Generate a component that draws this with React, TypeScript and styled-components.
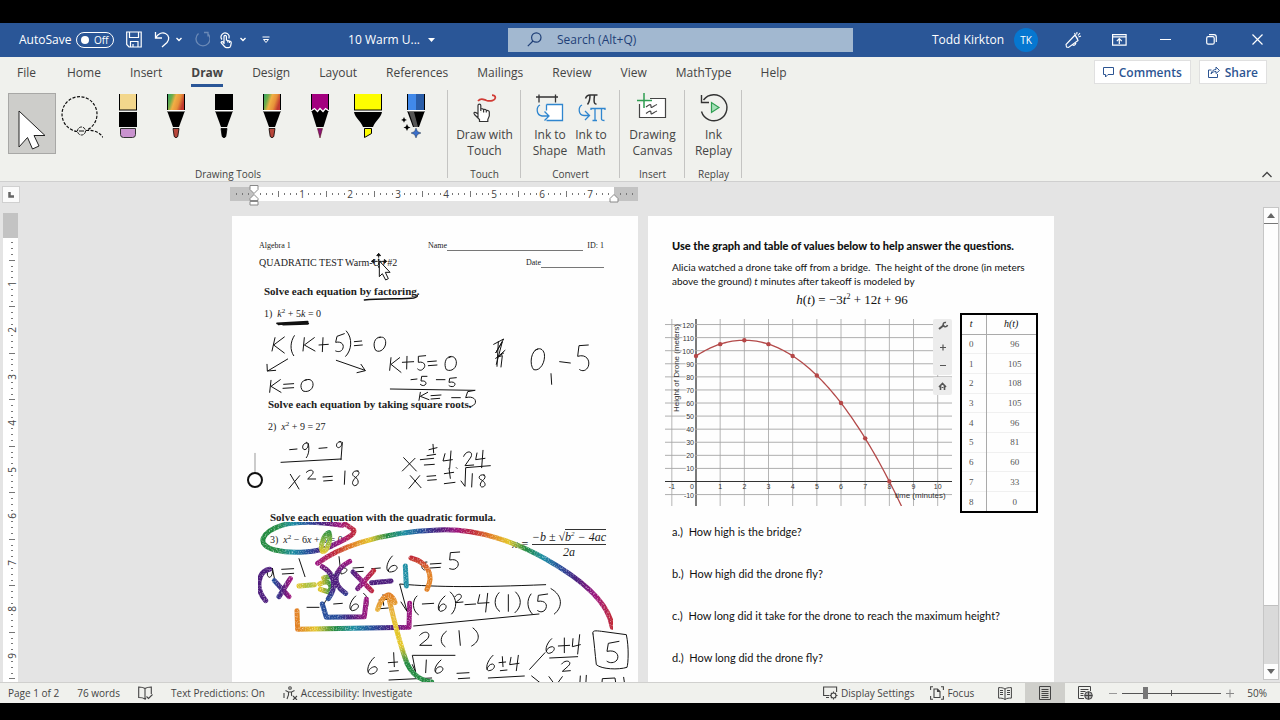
import React from "react";
import styled, { createGlobalStyle } from "styled-components";

const Global = createGlobalStyle`
  *, *::before, *::after { box-sizing: border-box; }
  body { margin: 0; background: #000; }
  button { font: inherit; color: inherit; border: 0; padding: 0; background: none; cursor: pointer; }
  h2, p { margin: 0; font-weight: inherit; font-size: inherit; }
  svg { display: block; flex: none; }
`;

const Screen = styled.div`
  display: flex;
  flex-direction: column;
  height: 100vh;
  min-height: 480px;
  padding: 23px 0 17px;
  background: #000;
  color: #444;
  font-family: "Open Sans", "Noto Sans", sans-serif;
  overflow: hidden;
`;

/* ---------- Title bar ---------- */

const TitleBar = styled.header`
  display: grid;
  grid-template-columns: 508fr 345fr 427fr;
  align-items: center;
  flex: none;
  height: 34px;
  padding-bottom: 1px;
  background: #2a5697;
  color: #fff;
  font-size: 12px;
`;
const QuickAccess = styled.div`
  display: flex;
  align-items: center;
  padding: 0 73px 0 19px;
`;
const AutoSave = styled.button`
  display: flex;
  align-items: center;
  gap: 5px;
  margin-right: 12px;
`;
const Toggle = styled.span`
  display: flex;
  align-items: center;
  justify-content: space-between;
  width: 38px;
  height: 16px;
  padding: 0 5px 0 4px;
  border: 1px solid #fff;
  border-radius: 8px;
  font-size: 10px;
  &::before { content: ""; width: 8px; height: 8px; border-radius: 50%; background: #fff; }
`;
const QuickButton = styled.button<{ $gap?: number; $dim?: boolean }>`
  margin-right: ${(p) => p.$gap ?? 12}px;
  opacity: ${(p) => (p.$dim ? 0.3 : 1)};
`;
const DocTitle = styled.button`
  display: flex;
  align-items: center;
  gap: 8px;
  margin-left: auto;
  white-space: nowrap;
`;
const SearchBox = styled.label`
  display: flex;
  align-items: center;
  gap: 15px;
  height: 24px;
  padding-left: 19px;
  background: #a2b8d0;
  color: #1f3f77;
`;
const SearchInput = styled.input`
  flex: 1;
  min-width: 0;
  border: 0;
  outline: 0;
  padding: 0;
  background: transparent;
  color: #1f3f77;
  font: inherit;
  &::placeholder { color: #1f3f77; opacity: 1; }
`;
const WindowArea = styled.div`
  display: flex;
  align-items: center;
  justify-content: flex-end;
`;
const Account = styled.button`
  display: flex;
  align-items: center;
  gap: 10px;
  margin-right: 12px;
`;
const Avatar = styled.span`
  display: grid;
  place-items: center;
  width: 24px;
  height: 24px;
  border-radius: 50%;
  background: #0677d0;
  font-size: 10px;
`;
const WindowButton = styled.button`
  display: grid;
  place-items: center;
  width: 46px;
  height: 32px;
`;

/* ---------- Ribbon ---------- */

const RibbonTabs = styled.nav`
  display: flex;
  align-items: center;
  flex: none;
  height: 33px;
  padding: 0 13px 0 17px;
  background: #f0f1ed;
  font-size: 12px;
`;
const TabList = styled.div`
  display: flex;
  gap: 29px;
  flex: 1;
`;
const Tab = styled.button<{ $active?: boolean }>`
  line-height: 20px;
  padding: 3px 0 1px;
  border-bottom: 3px solid ${(p) => (p.$active ? "#2a5697" : "transparent")};
  font-weight: ${(p) => (p.$active ? 700 : 400)};
  &:first-child { margin-right: 2px; }
`;
const ActionButton = styled.button`
  display: flex;
  align-items: center;
  gap: 5px;
  height: 24px;
  margin: 0 0 3px 8px;
  padding: 0 8px;
  border: 1px solid #e0e0e0;
  background: #fff;
  color: #2d5592;
  font-weight: 600;
`;
const Ribbon = styled.section`
  display: flex;
  flex: none;
  height: 92px;
  padding: 0 6px 0 8px;
  background: #f0f1ed;
  border-bottom: 1px solid #cfcfcf;
`;
const Group = styled.div<{ $width: number }>`
  display: flex;
  flex-direction: column;
  align-items: center;
  justify-content: space-between;
  width: ${(p) => p.$width}px;
  background: linear-gradient(#c4c4c2, #c4c4c2) 100% 0 / 1px 88px no-repeat;
`;
const GroupTools = styled.div`
  display: flex;
  gap: 1px;
  padding-top: 3px;
`;
const PenTools = styled(GroupTools)`
  gap: 0;
  align-self: flex-start;
`;
const GroupLabel = styled.div`
  font-size: 10px;
  line-height: 14px;
`;
const PenButton = styled.button<{ $active?: boolean }>`
  display: flex;
  justify-content: center;
  width: 48px;
  height: 61px;
  border: 1px solid ${(p) => (p.$active ? "#a8a8a6" : "transparent")};
  background: ${(p) => (p.$active ? "#cdcdca" : "none")};
`;
const LargeButton = styled.button`
  display: flex;
  flex-direction: column;
  align-items: center;
  gap: 2px;
  min-width: 40px;
  font-size: 12px;
  line-height: 16px;
`;
const Collapse = styled.button`
  margin-left: auto;
  padding-bottom: 2px;
  align-self: flex-end;
`;

/* ---------- Workspace ---------- */

const Workspace = styled.main`
  display: grid;
  grid-template-columns: 22px 1fr 17px;
  grid-template-rows: 31px 1fr;
  flex: 1;
  min-height: 0;
  background: #e4e4e4;
`;
const TabSelector = styled.button`
  width: 18px;
  height: 17px;
  margin: 4px 0 0 2px;
  border: 1px solid #d0d0d0;
  background: #fbfbfb;
  display: grid;
  place-items: center;
`;
const RulerTrack = styled.div`
  display: flex;
  justify-content: center;
  padding-top: 5px;
`;
const HRuler = styled.div`
  position: relative;
  display: flex;
  align-items: center;
  width: 408px;
  height: 14px;
  padding-left: 3px;
  margin-right: 417px;
  background: linear-gradient(90deg, #c3c3c3 24px, #fff 24px 384px, #c3c3c3 384px);
`;
const HCell = styled.span`
  display: grid;
  place-items: center;
  flex: none;
  width: 6px;
  font-size: 10px;
  line-height: 14px;
`;
const Mark = styled.i<{ $w: number; $h: number }>`
  width: ${(p) => p.$w}px;
  height: ${(p) => p.$h}px;
  background: #777;
`;
const Indent = styled.svg<{ $x: number }>`
  position: absolute;
  left: ${(p) => p.$x}px;
  top: -2px;
`;
const VRuler = styled.div`
  display: flex;
  flex-direction: column;
  width: 15px;
  margin-left: 3px;
  min-height: 0;
  overflow: hidden;
  background: #fff;
`;
const VMargin = styled.div`
  flex: none;
  height: 25px;
  margin-bottom: 2px;
  background: #c3c3c3;
`;
const VCell = styled.span`
  display: grid;
  place-items: center;
  flex: 1 1 0;
  min-height: 0;
  padding-left: 3px;
  font-size: 10px;
  line-height: 4px;
`;
const VNumber = styled.b`
  font-weight: 400;
  line-height: 4px;
  transform: rotate(-90deg);
`;
const Canvas = styled.div`
  display: flex;
  justify-content: center;
  align-items: flex-start;
  gap: 10px;
  min-height: 0;
  padding: 3px 0 0 1px;
  overflow: hidden;
`;
const ScrollBar = styled.div`
  display: flex;
  flex-direction: column;
  min-height: 0;
  margin: -6px 1px 2px 0;
  border: 1px solid #c6c6c6;
  background: #fdfdfd;
`;
const ScrollThumb = styled.div`
  flex: 1;
  border-top: 1px solid #777;
  border-bottom: 1px solid #c0c0c0;
`;
const ScrollTrack = styled.div`
  flex: none;
  height: 58px;
  background: #dadada;
`;
const ScrollButton = styled.button`
  display: grid;
  place-items: center;
  height: 15px;
`;

/* ---------- Document pages ---------- */

const Page = styled.article`
  position: relative;
  flex: none;
  width: 406px;
  min-height: 528px;
  background: #fefefe;
  color: #222;
`;
const Worksheet = styled(Page)`
  padding: 24px 34px 0 27px;
  font-family: "Liberation Serif", "Times New Roman", serif;
  font-size: 10px;
`;
const HeaderRow = styled.div`
  display: flex;
  align-items: center;
  justify-content: space-between;
  line-height: 12px;
  margin-bottom: 5px;
`;
const Field = styled.span<{ $width: number }>`
  display: flex;
  width: ${(p) => p.$width}px;
  font-size: 8px;
`;
const Blank = styled.span`
  flex: 1;
  margin: 0 4px 1px 0;
  border-bottom: 1px solid #777;
  &:last-child { margin-right: 0; }
`;
const Small = styled.span`
  font-size: 8px;
`;
const Problem = styled.section<{ $indent: number }>`
  height: 113px;
  padding-left: ${(p) => p.$indent}px;
  line-height: 14px;
  white-space: nowrap;
`;
const ProblemList = styled.div`
  padding-top: 10px;
`;
const ProblemTitle = styled.h2`
  margin-bottom: 9px;
  font-weight: 700;
  font-size: 11px;
`;
const Equation = styled.div`
  display: flex;
  justify-content: space-between;
  height: 14px;
  sup { font-size: 7px; line-height: 0; }
`;
const Formula = styled.span`
  display: flex;
  align-items: center;
  height: 30px;
  margin: -4px -2px 0 0;
  gap: 3px;
  font-style: italic;
  font-size: 12px;
`;
const Fraction = styled.span`
  display: flex;
  flex-direction: column;
  align-items: center;
`;
const Numerator = styled.span`
  border-bottom: 1px solid #333;
`;
const Radicand = styled.span`
  border-top: 1px solid #333;
`;
const Ink = styled.svg`
  position: absolute;
  left: 0;
  top: 0;
  fill: none;
  stroke: #111;
  stroke-width: 3;
  stroke-linecap: round;
  stroke-linejoin: round;
`;

const DronePage = styled(Page)`
  padding: 23px 16px 0 24px;
  font-family: Lato, Carlito, sans-serif;
  font-size: 10px;
  line-height: 14px;
  color: #111;
  white-space: nowrap;
`;
const DroneTitle = styled.h2`
  font-size: 11px;
  font-weight: 900;
  margin-bottom: 7px;
`;
const Model = styled.p`
  margin-top: 5px;
  padding-right: 6px;
  text-align: center;
  font-family: "Liberation Serif", "Times New Roman", serif;
  font-size: 13px;
  sup { font-size: 8px; line-height: 0; }
`;
const Figures = styled.div`
  display: flex;
  justify-content: space-between;
  align-items: flex-start;
  margin: 6px 0 12px -7px;
`;
const Chart = styled.svg`
  margin-top: 6px;
  font-family: "Liberation Sans", Arial, sans-serif;
`;
const ValueTable = styled.table`
  width: 78px;
  height: 200px;
  border: 2px solid #000;
  border-collapse: collapse;
  font-family: "Liberation Serif", "Times New Roman", serif;
  font-size: 9px;
  line-height: 12px;
  color: #555;
  th, td { padding: 0; text-align: center; border-top: 1px solid #f0f0f0; }
  th { font-style: italic; font-weight: 400; font-size: 10px; height: 20px; color: #111; }
  tbody tr:first-child td { border-top-color: #aaa; }
  th:first-child, td:first-child { width: 25px; padding-right: 5px; border-right: 1px solid #aaa; }
  td:last-child { padding-left: 7px; }
`;
const Questions = styled.div`
  display: flex;
  flex-direction: column;
  gap: 28px;
  font-size: 11px;
`;
const Question = styled.p`
  white-space: pre;
`;

/* ---------- Status bar ---------- */

const StatusBar = styled.footer`
  display: flex;
  align-items: center;
  flex: none;
  height: 21px;
  padding: 0 13px 0 8px;
  border-top: 1px solid #d0d0ce;
  background: #f0f1ed;
  font-size: 10px;
  white-space: nowrap;
`;
const StatusGroup = styled.div<{ $gap: number; $end?: boolean }>`
  display: flex;
  align-items: center;
  height: 100%;
  gap: ${(p) => p.$gap}px;
  margin: ${(p) => (p.$end ? "0 11px 0 auto" : "0")};
`;
const StatusButton = styled.button`
  display: flex;
  align-items: center;
  gap: 3px;
`;
const ViewButton = styled.button<{ $active?: boolean }>`
  display: grid;
  place-items: center;
  width: 40px;
  height: 100%;
  background: ${(p) => (p.$active ? "#cfcfcb" : "none")};
`;
const ZoomControl = styled.div`
  display: flex;
  align-items: center;
  gap: 5px;
  margin-left: 4px;
`;
const ZoomSlider = styled.input`
  appearance: none;
  width: 99px;
  height: 12px;
  margin: 0;
  background:
    linear-gradient(#555, #555) 50% 50% / 1px 6px no-repeat,
    linear-gradient(#555, #555) 50% 50% / 100% 1px no-repeat;
  &::-webkit-slider-thumb { appearance: none; width: 5px; height: 12px; background: #777; }
`;
const ZoomValue = styled.span`
  margin-left: 8px;
`;

/* ---------- Icons ---------- */

type IconProps = { w: number; h: number; children: React.ReactNode; sw?: number };
const Icon = ({ w, h, children, sw = 1 }: IconProps) => (
  <svg width={w} height={h} viewBox={`0 0 ${w} ${h}`} fill="none" stroke="currentColor" strokeWidth={sw} aria-hidden="true">
    {children}
  </svg>
);
const Chevron = () => <Icon w={6} h={5} sw={1.4}><path d="M.5 1l2.500 2.500L5.500 1" /></Icon>;

const HandIcon = () => (
  <Icon w={14} h={18} sw={1.200}>
    <path d="M5 13V5.500a1.200 1.200 0 0 1 2.400 0V9l4 1.200c1 .4 1 1 .8 2l-.6 3c-.3 1-1 1.500-2 1.500H7.500c-1 0-1.500-.6-2-1.200L2.300 12c-.6-1 .6-1.800 1.400-1.200L5 12M8.800 9.500v2M10.500 10v2" />
    <path d="M3 8.500A4 4 0 1 1 9.800 7.500" />
  </Icon>
);

type PenKind = { top: string; tip: string; kind: "pen" | "pencil" | "marker" | "eraser" | "action"; name: string };
const pens: PenKind[] = [
  { name: "Eraser", kind: "eraser", top: "#f3d78c", tip: "#c993cf" },
  { name: "Pen: Rainbow", kind: "pen", top: "url(#rainbowPen)", tip: "#b8463a" },
  { name: "Pen: Black", kind: "pen", top: "#000", tip: "#000" },
  { name: "Pen: Rainbow, thick", kind: "pen", top: "url(#rainbowPen)", tip: "#b8463a" },
  { name: "Pencil: Purple", kind: "pencil", top: "#a3007f", tip: "#8b1478" },
  { name: "Highlighter: Yellow", kind: "marker", top: "#fdfd00", tip: "#fdfd00" },
  { name: "Action Pen", kind: "action", top: "#2a5da8", tip: "#3b6fc9" },
];

const PenIcon = ({ pen }: { pen: PenKind }) => {
  const { kind, top, tip } = pen;
  if (kind === "eraser")
    return (
      <svg width="30" height="48" viewBox="0 0 30 48" aria-hidden="true">
        <rect x="6.500" y="-1" width="17" height="17" fill={top} stroke="#000" />
        <rect x="6" y="18" width="18" height="15" fill="#000" />
        <path d="M7.500 34.500h15v6a3 3 0 0 1-3 3h-9a3 3 0 0 1-3-3z" fill={tip} stroke="#333" />
      </svg>
    );
  if (kind === "marker")
    return (
      <svg width="30" height="48" viewBox="0 0 30 48" aria-hidden="true">
        <rect x="1.500" y="-1" width="27" height="17" fill={top} stroke="#000" />
        <path d="M1 18h28c-1 6-7 9-9 15H10C8 27 2 24 1 18z" fill="#000" />
        <path d="M11.500 34.500h7v5l-7 4z" fill={tip} stroke="#000" />
      </svg>
    );
  return (
    <svg width="30" height="48" viewBox="0 0 30 48" aria-hidden="true">
      <rect x="6.500" y="-1" width="17" height="18" fill={top} stroke="#000" />
      {kind === "action" && <rect x="7" y="0" width="8" height="16" fill="#4189ea" />}
      {kind === "pencil" ? (
        <>
          <path d="M6.500 17l3-2.500 3 3 2.500-3 3 3 2.500-3 3 2.500-5 16h-7z" fill="#000" />
          <path d="M6 17l3.500-2.500 3 3 2.500-3 3 3 2.500-3 3.500 2.500" fill="none" stroke="#fff" strokeWidth="1.200" />
          <path d="M12.500 34.500h5L15 44z" fill={tip} stroke="#400" strokeWidth=".5" />
        </>
      ) : (
        <>
          <path d="M6 16.500h18" stroke="#fff" />
          <path d="M6.500 18h17l-5.500 15h-6z" fill="#000" />
          {kind === "pen" && <path d="M12 34.500h6l-1.200 8q-1.800 2.500-3.600 0z" fill={tip} stroke="#000" strokeWidth=".8" />}
          {kind === "action" && (
            <>
              <path d="M8 18h5l4 15h-4z" fill="#555" />
              <path d="M15 34l1.500 3.500L20 39l-3.500 1.500L15 44l-1.500-3.500L10 39l3.500-1.500z" fill={tip} stroke="#123" strokeWidth=".4" />
              <path d="M3 23l.9 2 2 .9-2 .9-.9 2-.9-2-2-.9 2-.9zM6 30l1.100 2.400L9.500 33.500 7.100 34.600 6 37l-1.100-2.400L2.500 33.500l2.400-1.100z" fill="#000" />
            </>
          )}
        </>
      )}
    </svg>
  );
};

const LassoIcon = () => (
  <svg width="46" height="48" viewBox="0 0 46 48" fill="none" stroke="#111" aria-hidden="true">
    <path d="M20 37.500A17.500 17.500 0 1 1 30 36" strokeDasharray="3 1.500" strokeWidth="1.200" />
    <circle cx="24.500" cy="37" r="4" strokeDasharray="3 1" />
    <path d="M22 37h5" />
    <path d="M29 36.500c8-1 14 2 17 7" strokeDasharray="3 1.500" strokeWidth="1.200" />
  </svg>
);

/* ---------- Ink annotations ---------- */

const blackInkFactoring = [
  "M150 38L141 78M178 36L146 60L178 84M208 32C196 50 194 75 206 92M238 38L234 78M268 38L238 60L270 78M282 60L310 58M294 38L292 80",
  "M358 26L336 34L332 52C350 48 360 60 352 74C346 82 336 80 332 78M364 18C384 40 380 76 362 94M388 50L410 48M388 62L412 60",
  "M466 36C448 36 442 60 452 76C466 86 484 68 482 50C480 38 474 34 462 38M188 102L128 138M126 118L127 138L152 136M334 106L420 136M408 118L421 137L396 143",
  "M138 166L134 202M166 164L138 184L168 202M176 178L206 176M174 190L206 188M246 164C228 164 222 186 234 198C252 204 266 190 264 176C262 164 252 160 240 166",
  "M498 98L494 136M524 98L498 118L528 142M532 112L566 110M546 94L545 132M602 92L580 94L580 112C600 108 604 124 594 132C588 138 582 136 578 132",
  "M608 110L634 108M610 122L636 120M678 94C660 94 656 120 664 134C680 142 696 128 694 110C692 98 684 90 672 98",
  "M558 164L576 162M606 154L590 154L588 168C604 166 606 176 600 180C594 184 588 180 586 178M634 164L660 164M694 158L674 160L672 172C690 168 694 178 686 184C680 186 674 184 672 182",
  "M496 192L748 196M586 202L582 226M608 202L586 214L612 224M618 212L648 210M618 222L644 220M680 218L706 218M750 196L728 200L722 218C744 212 756 224 750 236C744 244 736 246 732 244",
  "M806 58L836 42L812 84L832 50L814 118M820 50L816 124M840 76L818 96L832 92L828 126M812 100L836 84",
  "M938 72C918 76 912 118 926 134C946 140 962 110 958 86C954 72 944 66 930 76M978 146L980 178M1004 110L1036 114M1090 60L1062 62L1058 94C1084 86 1096 106 1090 124C1084 138 1072 140 1064 134",
];
const blackInkRoots = [
  "M194 374L216 372M246 354C232 352 228 374 240 374C252 370 252 350 244 352M250 356C254 376 250 390 244 398M282 370L306 368M348 350C334 348 330 366 340 368C352 366 354 350 344 350M352 352L348 404M168 412L348 402",
  "M196 448L222 492M224 452L192 490M244 442C256 430 270 436 262 448L248 462L272 462M294 456L322 454M296 468L322 466M360 438L358 478M400 438C384 434 376 450 390 456C404 464 402 482 388 482C376 476 386 462 396 454C404 446 404 438 396 438",
  "M536 398L574 438M570 400L532 438M586 404L626 400M606 392L632 388M598 420L628 418M624 358L626 384M612 374L636 368",
  "M660 386L654 408L682 404M678 378L674 430M694 428l2 2M716 394C724 374 746 378 738 396L720 422L746 420M756 384L752 404L780 400M774 376L770 428",
  "M556 452L588 488M584 452L552 490M606 454L632 452M608 466L634 464M672 430L676 460M658 446L686 442M658 476L690 472M708 468L720 484L722 428L796 422M742 446L740 486M778 450C762 446 758 460 768 464C784 472 784 486 770 486C760 480 770 468 778 462C782 454 780 450 776 450",
];
const blackInkQuadratic = [
  "M140 206C126 206 122 230 134 232C142 230 144 212 142 204L148 234M170 208L206 206M172 222L206 220M222 176L240 230",
  "M342 170L348 222C364 220 372 208 360 204C354 204 348 210 346 216M384 204L416 202M384 216L414 214M440 206L466 204M502 168C484 186 480 214 494 216C516 216 524 198 508 196C498 196 490 206 490 212",
  "M606 186C590 184 584 206 598 210M616 192L648 190M616 204L646 202M704 156L676 158L674 180C700 174 706 194 694 204C688 210 680 208 674 206",
  "M246 322L282 322M304 300C290 316 292 340 310 348M326 312L352 310M392 288C372 306 370 330 382 332C402 330 406 312 392 312C384 312 376 322 378 328M416 280C436 296 432 326 416 340",
  "M462 300L490 298M474 284L476 316M466 326L490 324M528 306L546 334L524 252C640 262 760 262 962 254",
  "M576 288C560 300 562 334 580 344M592 312L626 310M660 288C640 304 634 328 646 334C666 332 668 314 656 312C648 312 640 322 642 330M676 276C698 296 696 326 680 342M690 290C700 276 716 284 706 296L692 308L714 306",
  "M720 314L752 312M764 284L758 310L792 308M788 280L782 336M822 278C806 294 806 322 824 334M850 284L850 334M872 276C892 296 890 320 870 338M918 282C904 300 906 326 922 342M968 282L940 286L938 304C962 300 970 316 960 330C952 338 944 336 938 332M978 266C1014 286 1014 322 988 342",
  "M566 378L942 342M584 406C600 388 620 398 608 416L584 436L620 436M664 394C644 408 644 430 660 440M702 392L706 436M744 384C766 400 766 424 740 438",
  "M448 472C430 488 422 514 434 522C454 524 464 504 450 500C440 500 430 510 430 516M490 488L518 486M506 458L508 500M494 514L520 512M492 540L620 534M562 494L572 516L562 466L690 466M604 480L602 518M648 480C630 496 624 514 636 520C654 518 660 502 646 500C636 500 630 510 632 516",
  "M696 520L732 518M700 536L734 534M804 466C786 482 780 508 790 512C808 512 814 494 802 492C794 492 786 502 786 508M822 488L842 486M832 470L834 500M826 512L846 510M858 472L854 494L882 490M880 466L874 512M790 534L898 528M914 508L960 458",
  "M980 416C962 432 958 456 970 460C986 460 994 442 982 440C972 440 964 448 964 454M1000 438L1034 436M1018 414L1018 458M1044 416L1042 440L1066 434M1064 404L1058 462M974 474L1058 470M1010 492C1022 476 1044 484 1030 498L1012 514L1036 512",
  "M920 528L960 560M972 530L994 560M1012 530L990 560M1066 528L1064 560M1084 526L1082 560M1130 560L1132 536L1170 534L1174 560M1196 532L1200 560",
  "M1104 402C1100 390 1112 392 1130 394L1204 404C1212 440 1210 490 1206 502C1180 510 1130 508 1114 494C1110 460 1108 430 1104 402M1182 424L1150 430L1146 454C1174 448 1184 466 1176 480C1168 490 1154 490 1146 484",
];

const C = { purple: "#4c1c7c", magenta: "#9c157e", red: "#c02836", orange: "#e28024", yellow: "#e4c62a", green: "#228a40", teal: "#1d8ea4", blue: "#254c9a" };
type Ramp = { id: string; from: [number, number]; to: [number, number]; stops: string[] };
const ramps: Ramp[] = [
  { id: "arc", from: [278, 0], to: [1162, 0], stops: [C.magenta, C.red, C.orange, C.yellow, C.green, C.teal, C.blue, C.purple, C.magenta, C.red, C.orange, C.yellow, C.green, C.teal, C.blue, C.purple, C.magenta, C.red] },
  { id: "oval", from: [110, 0], to: [390, 0], stops: [C.green, C.green, C.teal, C.blue, C.purple, C.magenta, C.red] },
  { id: "leaf", from: [0, 90], to: [0, 160], stops: [C.green, "#8fb840", C.yellow] },
  { id: "firstX", from: [146, 0], to: [196, 0], stops: [C.blue, C.purple, C.magenta] },
  { id: "lime", from: [216, 0], to: [320, 0], stops: [C.yellow, "#a5c045", C.yellow, C.green] },
  { id: "cross", from: [0, 184], to: [0, 298], stops: [C.magenta, C.purple, C.purple, C.blue] },
  { id: "secondX", from: [384, 0], to: [446, 0], stops: [C.purple, C.magenta, C.red] },
  { id: "close", from: [0, 170], to: [0, 268], stops: [C.red, C.orange, C.orange] },
  { id: "small", from: [292, 0], to: [424, 0], stops: [C.blue, C.blue, C.purple, C.magenta] },
  { id: "large", from: [216, 0], to: [556, 0], stops: [C.orange, C.yellow, C.green, C.teal, C.blue, C.purple, C.magenta] },
  { id: "arrow", from: [0, 284], to: [0, 540], stops: [C.orange, "#e8b43c", C.yellow, C.yellow, C.green, C.green] },
];
const rainbowInk: [string, string][] = [
  ["url(#oval)", "M352 76C300 68 230 60 170 76C110 96 90 134 150 150C200 162 280 158 320 138C360 118 392 104 386 90L360 72"],
  ["url(#leaf)", "M312 98C296 104 284 140 292 154C304 158 320 120 312 98"],
  ["url(#arc)", "M278 190C330 150 450 96 640 90C760 84 880 130 960 176C1060 232 1150 300 1162 382"],
  [C.purple, "M134 208C100 214 88 262 122 302"],
  ["url(#firstX)", "M148 242L192 290M196 236L162 290"],
  ["url(#lime)", "M222 258L268 254M322 228L296 234M284 252C310 236 326 256 312 276L286 268"],
  ["url(#cross)", "M292 200C330 222 336 262 310 296M374 184C326 210 318 250 362 280"],
  ["url(#secondX)", "M384 216L440 272M446 212L398 266"],
  [C.purple, "M440 248L498 243"],
  [C.teal, "M541 198L544 258"],
  ["url(#close)", "M558 174C604 186 630 220 606 268"],
  ["url(#small)", "M292 312L304 352L418 350L424 298"],
  ["url(#large)", "M216 332L218 388L552 382L554 310"],
  ["url(#arrow)", "M458 328C466 304 476 286 492 284C504 290 508 300 510 308M490 286C504 350 520 420 546 490C560 520 580 540 620 546"],
];

const InkLayer = () => (
  <Ink width="406" height="528" viewBox="0 0 406 528" aria-label="Ink annotations">
    <defs>
      {ramps.map((r) => (
        <linearGradient key={r.id} id={r.id} gradientUnits="userSpaceOnUse" x1={r.from[0]} y1={r.from[1]} x2={r.to[0]} y2={r.to[1]}>
          {r.stops.map((c, i) => <stop key={i} offset={i / (r.stops.length - 1)} stopColor={c} />)}
        </linearGradient>
      ))}
      <filter id="glitter" x="0" y="0" width="100%" height="100%" colorInterpolationFilters="sRGB">
        <feTurbulence type="fractalNoise" baseFrequency="0.25" numOctaves="2" seed="4" />
        <feColorMatrix values="0 0 0 0 1  0 0 0 0 1  0 0 0 0 1  1.4 0 0 0 -0.65" />
        <feComposite in2="SourceGraphic" operator="in" result="grain" />
        <feMerge><feMergeNode in="SourceGraphic" /><feMergeNode in="grain" /></feMerge>
      </filter>
    </defs>
    <g transform="translate(-7 -36) scale(.33333)">
      <path d="M418 360C460 354 540 358 566 354C574 352 580 348 576 346" strokeWidth="4" />
      <path d="M156 430L248 425M160 433C200 427 230 428 250 430M174 434L248 432" strokeWidth="5" />
      <g stroke="#111" strokeWidth="3">
        <path d="M461 226V262M440 244H484" strokeDasharray="6 5" />
        <path d="M456 226L461 220L466 226ZM446 239L440 244L446 249ZM479 239L485 244L479 249Z" fill="#111" />
        <path d="M463 244V290L472 281L482 300L490 296L481 277H494Z" fill="#fff" />
      </g>
    </g>
    <g transform="translate(-7 109) scale(.33333)">
      {[...blackInkFactoring, ...blackInkRoots].map((d) => <path key={d} d={d} />)}
      <path d="M90 385V444" stroke="#999" />
      <circle cx="90" cy="465" r="21" fill="#fff" strokeWidth="6" />
    </g>
    <g transform="translate(-7 284) scale(.33333)">
      {blackInkQuadratic.map((d) => <path key={d} d={d} />)}
      <g strokeWidth="15" filter="url(#glitter)">
        {rainbowInk.map(([stroke, d]) => <path key={d} d={d} stroke={stroke} />)}
      </g>
    </g>
  </Ink>
);

/* ---------- Drone chart ---------- */

const values = [96, 105, 108, 105, 96, 81, 60, 33, 0];
const px = (t: number) => 31 + t * 24.17;
const py = (h: number) => 162.5 - h * 1.308;
const height = (t: number) => -3 * t * t + 12 * t + 96;
const curve = Array.from({ length: 86 }, (_, i) => i / 10)
  .map((t, i) => `${i ? "L" : "M"}${px(t).toFixed(2)} ${py(height(t)).toFixed(2)}`)
  .join("");

const DroneChart = () => (
  <Chart width="287" height="187" viewBox="0 0 287 187" fontSize="7" fill="#333" role="img" aria-label="Height of drone over time">
    {Array.from({ length: 12 }, (_, i) => i - 1).map((t) => (
      <path key={t} d={`M${px(t)} 0V187`} stroke={t ? "#b5b5b5" : "#333"} strokeWidth={t ? 1 : 1.300} />
    ))}
    {Array.from({ length: 14 }, (_, i) => i - 1).map((n) => (
      <path key={n} d={`M0 ${py(n * 10)}H287`} stroke={n ? "#a6a6a6" : "#333"} strokeWidth={n ? 0.9 : 1.200} />
    ))}
    {Array.from({ length: 14 }, (_, i) => i - 1).filter((n) => n !== 0).map((n) => (
      <text key={n} x="29" y={py(n * 10) + 3} textAnchor="end" stroke="#fff" strokeWidth="2" paintOrder="stroke">{n * 10}</text>
    ))}
    {Array.from({ length: 12 }, (_, i) => i - 1).map((t) => (
      <text key={t} x={t ? px(t) : px(0) - 4} y="170" textAnchor="middle">{t}</text>
    ))}
    <path d={curve} fill="none" stroke="#b34a4a" strokeWidth="1.300" />
    {values.map((h, t) => <circle key={t} cx={px(t)} cy={py(h)} r="2.200" fill="#b54747" />)}
    <text transform="translate(14 93) rotate(-90)" fontSize="8">Height of Drone (meters)</text>
    <text x="230" y="179" fontSize="8">time (minutes)</text>
    <rect x="268" y="0" width="19" height="56" rx="2" fill="#ececec" />
    <rect x="268" y="58" width="19" height="18" rx="2" fill="#ececec" />
    <g fill="none" stroke="#555" strokeWidth="1.200">
      <path d="M274 10L279 6" strokeWidth="2" />
      <path d="M281 3.500a2.200 2.200 0 1 0 1.500 2.500" strokeWidth="1.500" />
      <path d="M275 28.500h6M278 25.500v6M275 46.500h6" />
      <path d="M274 68L277.500 64.500L281 68M275.500 67v4M279.500 67v4M277.500 68v1" strokeWidth="1.600" />
    </g>
  </Chart>
);

/* ---------- Rulers ---------- */

const HorizontalRuler = () => (
  <HRuler>
    {Array.from({ length: 67 }, (_, i) => i - 3).map((k) => (
      <HCell key={k}>
        {k === 0 || k === 60 ? null : k > 0 && k % 8 === 0 && k < 60 ? k / 8 : <Mark $w={1} $h={k % 4 === 0 ? 6 : 2} />}
      </HCell>
    ))}
    <Indent $x={19} width="10" height="21" viewBox="0 0 10 21" fill="#fff" stroke="#888">
      <path d="M1 .5h8v4L5 8.500L1 4.500zM5 9.500L9 13.500v2H1v-2zM1 16.500h8v3.500H1z" />
    </Indent>
    <Indent $x={379} width="10" height="21" viewBox="0 0 10 21" fill="#fff" stroke="#888">
      <path d="M5 9.500L9 13.500v3.500H1v-3.500z" />
    </Indent>
  </HRuler>
);
const VerticalRuler = () => (
  <VRuler>
    <VMargin />
    {Array.from({ length: 76 }, (_, i) => i + 1).map((k) => (
      <VCell key={k}>{k % 8 === 0 ? <VNumber>{k / 8}</VNumber> : <Mark $w={k % 4 === 0 ? 6 : 2} $h={1} />}</VCell>
    ))}
  </VRuler>
);

const tabs = ["File", "Home", "Insert", "Draw", "Design", "Layout", "References", "Mailings", "Review", "View", "MathType", "Help"];

export default function App() {
  return (
    <Screen>
      <Global />
      <TitleBar>
        <QuickAccess>
          <AutoSave>AutoSave<Toggle>Off</Toggle></AutoSave>
          <QuickButton aria-label="Save">
            <Icon w={16} h={17} sw={1.200}><path d="M.7 1h14.500v15H3L.7 13.500zM3.500 1v5.500h9V1M4.500 16v-5.500h7.500V16M7 13v3" /></Icon>
          </QuickButton>
          <QuickButton aria-label="Undo" $gap={6}>
            <Icon w={16} h={17} sw={1.300}><path d="M1.500 1v6H8M1.500 7C4 3 8 1 11.500 2.500c4 2 4 6 1.500 9L8 16" /></Icon>
          </QuickButton>
          <QuickButton aria-label="Undo options"><Chevron /></QuickButton>
          <QuickButton aria-label="Redo" $dim $gap={9}>
            <Icon w={16} h={17} sw={1.300}><path d="M10 1.500h4v4M13.500 2.500a7 7 0 1 1-9 0" /></Icon>
          </QuickButton>
          <QuickButton aria-label="Touch mode" $gap={7}><HandIcon /></QuickButton>
          <QuickButton aria-label="Touch mode options" $gap={16}><Chevron /></QuickButton>
          <QuickButton aria-label="Customize toolbar" $gap={0}>
            <Icon w={8} h={8}><path d="M.5 1h7M1.500 3.500h5L4 6.500z" /></Icon>
          </QuickButton>
          <DocTitle>10 Warm U...<Icon w={7} h={4}><path d="M0 0h7L3.500 4z" fill="#fff" stroke="none" /></Icon></DocTitle>
        </QuickAccess>
        <SearchBox>
          <Icon w={15} h={15} sw={1.200}><circle cx="9.300" cy="5.500" r="4.700" /><path d="M6 9L.8 14.200" /></Icon>
          <SearchInput type="search" aria-label="Search" placeholder="Search (Alt+Q)" />
        </SearchBox>
        <WindowArea>
          <Account>Todd Kirkton<Avatar>TK</Avatar></Account>
          <WindowButton aria-label="Drawing mode">
            <Icon w={18} h={18} sw={1.100}><path d="M11 4L2 13.500l.5 2.500 2 .5 9.500-7zM8.500 13.500c1 1.500 2.500 1 3.500-1.500M10.500 2l1 2M13 1l-.3 2.500M16 2l-2 2.500M17 5l-2.500 1M11.500 4.500l2.500 4" /></Icon>
          </WindowButton>
          <WindowButton aria-label="Ribbon display options">
            <Icon w={15} h={12} sw={1.200}><path d="M.6.600h13.500v10.500H.6zM.6 2.800h13.500M7.300 10V5M4.800 7.200L7.300 4.700l2.500 2.500" /></Icon>
          </WindowButton>
          <WindowButton aria-label="Minimize"><Icon w={11} h={11}><path d="M0 5.500h11" /></Icon></WindowButton>
          <WindowButton aria-label="Restore">
            <Icon w={11} h={11} sw={1.200}><rect x=".7" y="2.700" width="7.500" height="7.500" rx="1.500" /><path d="M3 .7h5c1.500 0 2.300.8 2.300 2.300v5" /></Icon>
          </WindowButton>
          <WindowButton aria-label="Close"><Icon w={11} h={11} sw={1.200}><path d="M.5.500l10 10M10.500.500l-10 10" /></Icon></WindowButton>
        </WindowArea>
      </TitleBar>

      <RibbonTabs>
        <TabList>
          {tabs.map((t) => <Tab key={t} $active={t === "Draw"}>{t}</Tab>)}
        </TabList>
        <ActionButton>
          <Icon w={11} h={11}><path d="M.5.500h10v7H5L2.500 10V7.500h-2z" /></Icon>Comments
        </ActionButton>
        <ActionButton>
          <Icon w={12} h={12}><path d="M3.500 4H.5v7.500h9V8M3 8c.5-3 2.500-4.500 5-4.500V1l3.500 3.500L8 7.500V5.500C6 5.500 4.500 6 3 8z" /></Icon>Share
        </ActionButton>
      </RibbonTabs>

      <Ribbon>
        <Group $width={440}>
          <PenTools>
            <PenButton $active aria-label="Select objects">
              <svg width="30" height="58" viewBox="0 0 30 58" aria-hidden="true">
                <path d="M2 17V53l8.500-9.500 5 11.500 6.500-3-5-10.500h11z" fill="#fff" stroke="#222" />
              </svg>
            </PenButton>
            <PenButton aria-label="Lasso select"><LassoIcon /></PenButton>
            {pens.map((p) => <PenButton key={p.name} aria-label={p.name}><PenIcon pen={p} /></PenButton>)}
          </PenTools>
          <GroupLabel>Drawing Tools</GroupLabel>
        </Group>
        <Group $width={73}>
          <GroupTools>
            <LargeButton>
              <Icon w={30} h={32}>
                <path d="M9 8c3-3.500 5.500-1.500 8.500-.5 4 1.200 8.500-.200 8.800-2.500.2-2-1.500-2.800-3.300-2.800" stroke="#d13c35" strokeWidth="1.800" />
                <path d="M9 24.500V12.500a1.400 1.400 0 0 1 2.800 0V18M11.800 16c1.500-.6 2.800 0 2.800 1V19.500M14.600 16.500c1.500-.4 2.700.2 2.700 1.200V19.500M17.300 17.500c1.500-.4 3 .5 3 1.500v4l-1.500 3.500v2H10.500v-2l-5-5c-1.500-2 .5-3.500 3.500-.500" fill="#fff" stroke="#333" strokeWidth="1.200" />
              </Icon>
              <span>Draw with<br />Touch</span>
            </LargeButton>
          </GroupTools>
          <GroupLabel>Touch</GroupLabel>
        </Group>
        <Group $width={99}>
          <GroupTools>
            <LargeButton>
              <Icon w={30} h={32} sw={1.300}>
                <path d="M1 4h22M4 1.500v8M20.500 1.500v8" stroke="#333" />
                <path d="M11.500 11.500h16v16h-16" fill="#fff" stroke="#2f86cf" />
                <path d="M5 12c-4 2-4 10 2 11h6M9.500 18.500l4.500 4.500-4.500 4.500M11.500 11.500v6" stroke="#2f86cf" />
              </Icon>
              <span>Ink to<br />Shape</span>
            </LargeButton>
            <LargeButton>
              <Icon w={30} h={32} sw={1.300}>
                <path d="M9.500 5.500c1-3 2-3.500 4.500-3.500h7.500M14 2c0 4-.5 7-2.500 9.500M18.500 2c-.5 4-1.200 9.500 2 9" stroke="#333" strokeWidth="1.500" />
                <path d="M6 12c-4 2-4 10 2 10.500h5M9 18l4.500 4.500L9 27" stroke="#2f86cf" />
                <path d="M15 17v-1.500h14v1.500M19 15.500v12M16.500 27.500h4.500M25.500 15.500V26q0 1.500 3 1.500" stroke="#2f86cf" />
              </Icon>
              <span>Ink to<br />Math</span>
            </LargeButton>
          </GroupTools>
          <GroupLabel>Convert</GroupLabel>
        </Group>
        <Group $width={65}>
          <GroupTools>
            <LargeButton>
              <Icon w={32} h={32} sw={1.200}>
                <path d="M3.500 11v13.500H29.500v-19H14" stroke="#444" fill="#fff" />
                <path d="M1 7.500h15M8 0v15" stroke="#2f9e52" strokeWidth="1.500" />
                <path d="M10 14c4-3 5-3 5-.5s3-1 6-2M10 20.500c4-3 5-3 5-.5s3-1 6-2" stroke="#444" />
              </Icon>
              <span>Drawing<br />Canvas</span>
            </LargeButton>
          </GroupTools>
          <GroupLabel>Insert</GroupLabel>
        </Group>
        <Group $width={57}>
          <GroupTools>
            <LargeButton>
              <Icon w={30} h={32} sw={1.200}>
                <path d="M2.500 18.500A13 13 0 1 0 4.500 7M2.500 2v7.500h7.500" stroke="#333" strokeWidth="1.400" />
                <path d="M12.500 9.500v10L20 14.500z" fill="#a6e0b8" stroke="#2f9e52" />
              </Icon>
              <span>Ink<br />Replay</span>
            </LargeButton>
          </GroupTools>
          <GroupLabel>Replay</GroupLabel>
        </Group>
        <Collapse aria-label="Collapse ribbon"><Icon w={14} h={8} sw={1.300}><path d="M2.500 6L7 1.500 11.500 6" /></Icon></Collapse>
      </Ribbon>

      <Workspace>
        <TabSelector aria-label="Tab selector"><Icon w={6} h={6} sw={2.500}><path d="M1.500 0v4.500H6" stroke="#666" /></Icon></TabSelector>
        <RulerTrack><HorizontalRuler /></RulerTrack>
        <span />
        <VerticalRuler />
        <Canvas>
          <Worksheet>
            <HeaderRow>
              <Small>Algebra 1</Small>
              <Field $width={176}><span>Name</span><Blank /><span>ID: 1</span></Field>
            </HeaderRow>
            <HeaderRow>
              <span>QUADRATIC TEST Warm-Up #2</span>
              <Field $width={78}><span>Date</span><Blank /></Field>
            </HeaderRow>
            <ProblemList>
              <Problem $indent={5}>
                <ProblemTitle>Solve each equation by factoring.</ProblemTitle>
                <Equation><span>1)&nbsp; <i>k</i><sup>2</sup> + 5<i>k</i> = 0</span></Equation>
              </Problem>
              <Problem $indent={9}>
                <ProblemTitle>Solve each equation by taking square roots.</ProblemTitle>
                <Equation><span>2)&nbsp; <i>x</i><sup>2</sup> + 9 = 27</span></Equation>
              </Problem>
              <Problem $indent={11}>
                <ProblemTitle>Solve each equation with the quadratic formula.</ProblemTitle>
                <Equation>
                  <span>3)&nbsp; <i>x</i><sup>2</sup> − 6<i>x</i> + 5 = 0</span>
                  <Formula>
                    <span>x =</span>
                    <Fraction>
                      <Numerator>−b ± √<Radicand>b<sup>2</sup> − 4ac</Radicand></Numerator>
                      <span>2a</span>
                    </Fraction>
                  </Formula>
                </Equation>
              </Problem>
            </ProblemList>
            <InkLayer />
          </Worksheet>
          <DronePage>
            <DroneTitle>Use the graph and table of values below to help answer the questions.</DroneTitle>
            <p>Alicia watched a drone take off from a bridge.&nbsp; The height of the drone (in meters<br />above the ground) <i>t</i> minutes after takeoff is modeled by</p>
            <Model><i>h</i>(<i>t</i>) = −3<i>t</i><sup>2</sup> + 12<i>t</i> + 96</Model>
            <Figures>
              <DroneChart />
              <ValueTable>
                <thead><tr><th>t</th><th>h(t)</th></tr></thead>
                <tbody>{values.map((h, t) => <tr key={t}><td>{t}</td><td>{h}</td></tr>)}</tbody>
              </ValueTable>
            </Figures>
            <Questions>
              <Question>{"a.)  How high is the bridge?"}</Question>
              <Question>{"b.)  How high did the drone fly?"}</Question>
              <Question>{"c.)  How long did it take for the drone to reach the maximum height?"}</Question>
              <Question>{"d.)  How long did the drone fly?"}</Question>
            </Questions>
          </DronePage>
        </Canvas>
        <ScrollBar>
          <ScrollButton aria-label="Scroll up"><Icon w={8} h={5}><path d="M0 5h8L4 0z" fill="#666" stroke="none" /></Icon></ScrollButton>
          <ScrollThumb />
          <ScrollTrack />
          <ScrollButton aria-label="Scroll down"><Icon w={8} h={5}><path d="M0 0h8L4 5z" fill="#666" stroke="none" /></Icon></ScrollButton>
        </ScrollBar>
      </Workspace>

      <StatusBar>
        <StatusGroup $gap={18}>
          <StatusButton>Page 1 of 2</StatusButton>
          <StatusButton>76 words</StatusButton>
          <StatusButton aria-label="Proofing">
            <Icon w={15} h={14} sw={1.100}><path d="M7 2.500C5 1 3 1 .700 1v10.500c2.500 0 4.500 0 6.300 1.500V2.500C9 1 11 1 13.300 1v7M7 13l1-.8M8.500 10.500l2 2 4-4" /></Icon>
          </StatusButton>
          <StatusButton>Text Predictions: On</StatusButton>
          <StatusButton>
            <Icon w={15} h={14} sw={1.100}><circle cx="7" cy="2" r="1.300" /><path d="M2.500 4.500L5.500 6v3L4 13M11.500 4.500L8.500 6v3l.5 1M5.500 6h3M1 7v5M10 10l4 4M14 10l-4 4" /></Icon>
            Accessibility: Investigate
          </StatusButton>
        </StatusGroup>
        <StatusGroup $gap={16} $end>
          <StatusButton>
            <Icon w={15} h={14} sw={1.100}><path d="M6 9.500H.600V1h13v5M3 11.500h3" /><circle cx="10.500" cy="9.500" r="2.500" /><path d="M10.500 5.500v1.500M10.500 12v1.500M6.500 9.500H8M13 9.500h1.500M8 7l1 1M13 7l-1 1M8 12l1-1M13 12l-1-1" /></Icon>
            Display Settings
          </StatusButton>
          <StatusButton>
            <Icon w={14} h={14} sw={1.100}><path d="M3 .700H.600V4M.600 10v3.300H3M11 .700h2.400V4M13.400 10v3.300H11M4 3h3.500L10 5.500V11.500H4zM7.500 3v2.500H10" /></Icon>
            Focus
          </StatusButton>
        </StatusGroup>
        <StatusGroup $gap={0}>
          <ViewButton aria-label="Read mode">
            <Icon w={14} h={13}><path d="M7 2C5 .600 3 .600.600.600v10.500c2.500 0 4.500 0 6.400 1.400C9 11.100 11 11.100 13.400 11.100V.600C11 .600 9 .600 7 2v10.500M2 3.500h3M2 5.500h3M2 7.500h3M9 3.500h3M9 5.500h3M9 7.500h3" /></Icon>
          </ViewButton>
          <ViewButton $active aria-label="Print layout">
            <Icon w={12} h={14}><path d="M.5.500h11v13H.5zM2.500 3.500h7M2.500 5.500h7M2.500 7.500h7M2.500 9.500h7M2.500 11.500h7" /></Icon>
          </ViewButton>
          <ViewButton aria-label="Web layout">
            <Icon w={15} h={14}><path d="M6 12.500H.5V.500h12V5M2.500 3.500h8M2.500 5.500h5M2.500 7.500h3M2.500 9.500h3" /><circle cx="10.500" cy="9.500" r="3.800" fill="#aaa" /><path d="M6.700 9.500h7.600M10.500 5.700v7.600" /></Icon>
          </ViewButton>
        </StatusGroup>
        <ZoomControl>
          <button aria-label="Zoom out"><Icon w={8} h={9}><path d="M0 4.500h8" stroke="#999" /></Icon></button>
          <ZoomSlider type="range" aria-label="Zoom" min={0} max={100} defaultValue={22} />
          <button aria-label="Zoom in"><Icon w={8} h={9}><path d="M0 4.500h8M4 .500v8" stroke="#888" /></Icon></button>
          <ZoomValue>50%</ZoomValue>
        </ZoomControl>
      </StatusBar>
      <svg width="0" height="0" aria-hidden="true">
        <defs>
          <linearGradient id="rainbowPen" x1="0" y1="0" x2="1" y2=".35">
            <stop offset="0" stopColor="#2aa36a" /><stop offset=".3" stopColor="#6fae4a" /><stop offset=".5" stopColor="#f0b045" /><stop offset=".75" stopColor="#e8923a" /><stop offset="1" stopColor="#c0392f" />
          </linearGradient>
        </defs>
      </svg>
    </Screen>
  );
}
